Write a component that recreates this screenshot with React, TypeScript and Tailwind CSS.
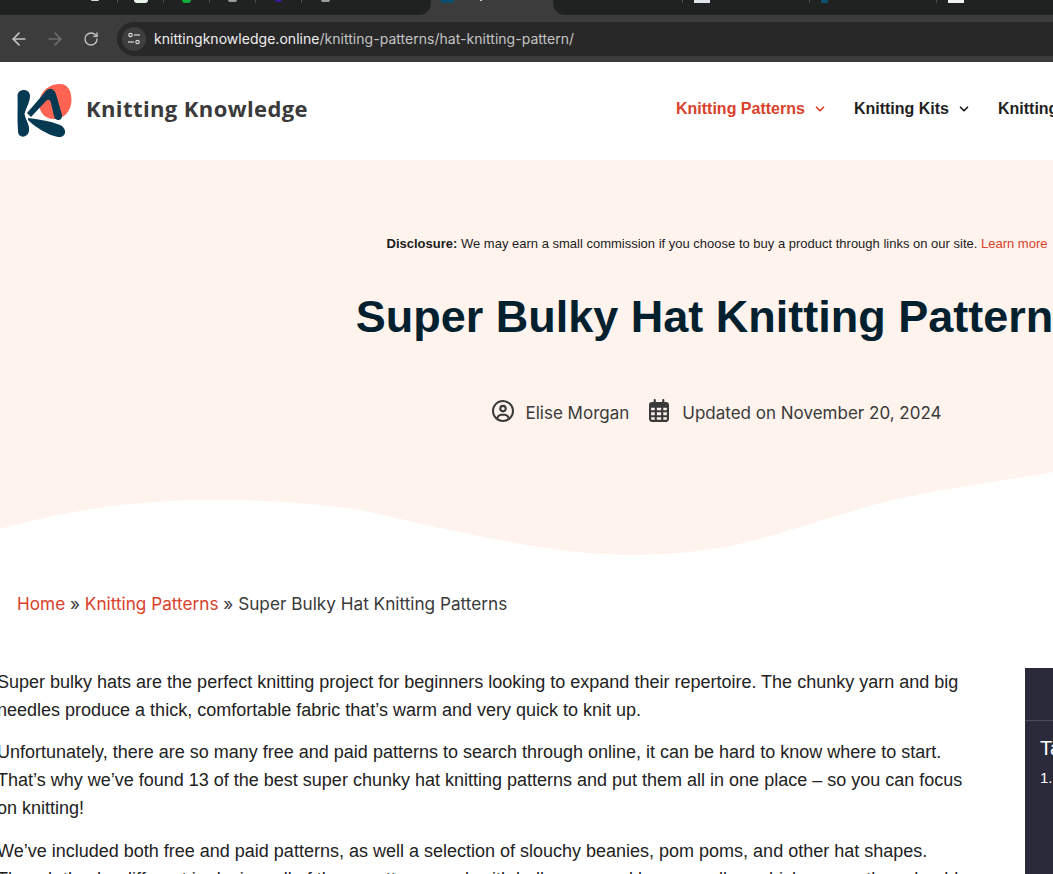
import { ArrowLeft, ArrowRight, RotateCw, ChevronDown } from "lucide-react"
import { FaRegCircleUser, FaRegCalendarDays } from "react-icons/fa6"

const leftTabs = [
  { bg: "bg-[#d8d8d8]", w: "w-[8px]", h: "h-[1px]" },
  { bg: "bg-[#e8f5ea]", w: "w-[14px]", h: "h-[3px]" },
  { bg: "bg-[#0fae3c]", w: "w-[9px]", h: "h-[3px]" },
  { bg: "bg-[#9a9ca0]", w: "w-[9px]", h: "h-[2px]" },
  { bg: "bg-[#3b1a9a]", w: "w-[7px]", h: "h-[2px]" },
  { bg: "bg-[#9a9ca0]", w: "w-[9px]", h: "h-[2px]" },
]

const rightTabs = [
  { bg: "bg-[#dfe3ea]", w: "w-[16px]" },
  { bg: "bg-[#0b4f6c]", w: "w-[7px]" },
  { bg: "bg-[#f1f1f1]", w: "w-[16px]" },
]

function Logo() {
  return (
    <svg width="56" height="56" viewBox="16 82 56 56" className="shrink-0">
      <path d="M39.5 100 C41 89 50 83 60 83 C68 83 71.5 90 71.5 99 C71.5 110 64 118 54 118 C44 118 38 110 39.5 100 Z" fill="#ff6352" />
      <path d="M17.5 95 C17.5 87 30 87 30 95 C30 101 26 107 24.5 113 C26 120 30 124 29 130 C28 137 18 138 18 130 C17 118 18 106 17.5 95 Z" fill="#053a52" />
      <path d="M27 112 L46 90 C50 86 54 88 56 93 L62 114 C63 120 55 121 54 115 L51 102 C50 98 48 98 46 100 L31 116 Z" fill="#053a52" />
      <path d="M28 117 C38 118 50 120 60 124 C68 128 66 137 58 136 C48 134 36 127 28 119 Z" fill="#053a52" />
    </svg>
  )
}

function Chrome() {
  return (
    <div className="bg-[#3c3c3c] h-[62px] shrink-0 overflow-hidden">
      <div className="flex h-[15px]">
        <div className="w-[431px] shrink-0 bg-[#202221] rounded-br-xl flex pl-[72px]">
          {leftTabs.map((tab, i) => (
            <div key={i} className={`w-[46px] h-[3px] flex justify-center ${i < 5 ? "border-r border-[#4a4a4a]" : ""}`}>
              <div className={`${tab.bg} ${tab.w} ${tab.h} rounded-b-full`} />
            </div>
          ))}
        </div>
        <div className="w-[122px] shrink-0 pl-[10px] flex gap-[26px]">
          <div className="w-[13px] h-[3px] bg-[#0b4f6c]" />
          <div className="w-[2px] h-[1px] bg-[#c8c8c8]" />
        </div>
        <div className="flex-1 min-w-0 overflow-hidden bg-[#202221] rounded-bl-xl flex">
          <div className="w-[130px] shrink-0 h-[3px] border-r border-[#4a4a4a]" />
          {rightTabs.map((tab, i) => (
            <div key={i} className={`w-[127px] shrink-0 h-[3px] pl-[11px] ${i < 2 ? "border-r border-[#4a4a4a]" : ""}`}>
              <div className={`${tab.bg} ${tab.w} h-[3px]`} />
            </div>
          ))}
        </div>
      </div>
      <div className="flex items-center h-[47px] pl-[9px]">
        <ArrowLeft className="w-[20px] h-[20px] text-[#c4c4c4]" />
        <ArrowRight className="w-[20px] h-[20px] text-[#6e6e6e] ml-[16px]" />
        <RotateCw className="w-[16px] h-[16px] text-[#c4c4c4] ml-[18px]" />
        <div className="ml-[18px] flex-1 h-[34px] bg-[#282828] rounded-l-full flex items-center pl-[5px]">
          <div className="w-[24px] h-[24px] rounded-full bg-[#3e3e3e] flex items-center justify-center">
            <svg width="14" height="14" viewBox="0 0 14 14" fill="none" stroke="#d8d8d8" strokeWidth="1.2">
              <circle cx="3.5" cy="3" r="1.7" />
              <path d="M7 3 H13" />
              <path d="M1 10 H7" />
              <circle cx="10.5" cy="10" r="1.7" />
            </svg>
          </div>
          <div className="ml-[8px] text-[14px] tracking-[0.03px] whitespace-nowrap font-['Inter',sans-serif] text-[#c4c4c4]">
            <span className="text-[#efefef]">knittingknowledge.online</span>/knitting-patterns/hat-knitting-pattern/
          </div>
        </div>
      </div>
    </div>
  )
}

function Header() {
  return (
    <header className="h-[98px] bg-white flex items-center pl-[16px] shrink-0 whitespace-nowrap">
      <Logo />
      <span className="ml-[14px] mb-[5px] text-[22px] tracking-[0.4px] font-bold text-[#3a3a3a] font-['Open_Sans',sans-serif]">Knitting Knowledge</span>
      <nav className="ml-[368px] mb-[4px] flex items-center text-[16px] font-bold font-['Liberation_Sans',sans-serif] text-[#1f1f1f] shrink-0">
        <span className="text-[#d9412b]">Knitting Patterns</span>
        <ChevronDown className="w-[14px] h-[14px] ml-[8px] text-[#d9412b]" strokeWidth={3} />
        <span className="ml-[27px]">Knitting Kits</span>
        <ChevronDown className="w-[14px] h-[14px] ml-[8px]" strokeWidth={3} />
        <span className="ml-[27px]">Knitting Tools</span>
      </nav>
    </header>
  )
}

function Hero() {
  return (
    <section className="shrink-0">
      <div className="bg-[#fef3ed] h-[312px] w-[1434px] text-center pt-[75px]">
        <p className="text-[13px] leading-[18px] text-[#1c1c1c] font-['Liberation_Sans',sans-serif]">
          <strong>Disclosure:</strong> We may earn a small commission if you choose to buy a product through links on our site.{" "}
          <span className="text-[#d9412b]">Learn more</span>
        </p>
        <h1 className="mt-[34px] text-[45px] leading-[60px] font-bold text-[#03202f] font-['Liberation_Sans',sans-serif]">
          Super Bulky Hat Knitting Patterns
        </h1>
        <div className="mt-[52px] flex justify-center items-center text-[17px] leading-[28px] text-[#3a3a3a] font-['Inter',sans-serif]">
          <FaRegCircleUser className="w-[22px] h-[22px] mb-[5px]" />
          <span className="ml-[11px]">Elise Morgan</span>
          <FaRegCalendarDays className="w-[20px] h-[23px] ml-[20px] mb-[5px]" />
          <span className="ml-[13px]">Updated on November 20, 2024</span>
        </div>
      </div>
      <svg className="block" width="1053" height="83" viewBox="0 0 1053 83">
        <path
          d="M0 0 H1053 C1000 10 930 18 873 33 C820 48 770 66 725 75 C695 80 665 83 631 83 C550 83 450 58 370 40 C320 30 260 28 208 28 C130 28 60 40 0 57 Z"
          fill="#fef3ed"
        />
      </svg>
    </section>
  )
}

function Article() {
  return (
    <div className="flex items-start">
      <article className="w-[985px] -ml-[3px] shrink-0 text-[18px] leading-[28px] text-[#222222] font-['Liberation_Sans',sans-serif]">
        <p className="mb-[14px]">
          Super bulky hats are the perfect knitting project for beginners looking to expand their repertoire. The chunky yarn and big needles produce a thick, comfortable fabric that’s warm and very quick to knit up.
        </p>
        <p className="mb-[15px]">
          Unfortunately, there are so many free and paid patterns to search through online, it can be hard to know where to start. That’s why we’ve found 13 of the best super chunky hat knitting patterns and put them all in one place – so you can focus on knitting!
        </p>
        <p className="mb-[14px]">
          We’ve included both free and paid patterns, as well a selection of slouchy beanies, pom poms, and other hat shapes. Though they’re different in design, all of these patterns work with bulky yarn and large needles, which means they should knit up quickly.
        </p>
      </article>
      <aside className="ml-[43px] w-[300px] h-[220px] bg-[#2b2a3a] text-white font-['Liberation_Sans',sans-serif] shrink-0">
        <div className="h-[53px] border-b border-[#4b4a5a]" />
        <div className="pl-[15px] pt-[14px] text-[20px] leading-[26px] whitespace-nowrap">Table of Contents</div>
        <div className="pl-[15px] pt-[6px] text-[15px] leading-[22px] whitespace-nowrap">1. Super Bulky</div>
      </aside>
    </div>
  )
}

export default function App() {
  return (
    <div className="w-[1053px] h-[874px] overflow-hidden bg-white flex flex-col">
      <Chrome />
      <Header />
      <Hero />
      <div className="pl-[17px] pt-[35px] pb-[50px] text-[17.2px] leading-[28px] text-[#3a3a3a] font-['Inter',sans-serif] shrink-0 whitespace-nowrap">
        <span className="text-[#d9412b]">Home</span> » <span className="text-[#d9412b]">Knitting Patterns</span> » Super Bulky Hat Knitting Patterns
      </div>
      <Article />
    </div>
  )
}
